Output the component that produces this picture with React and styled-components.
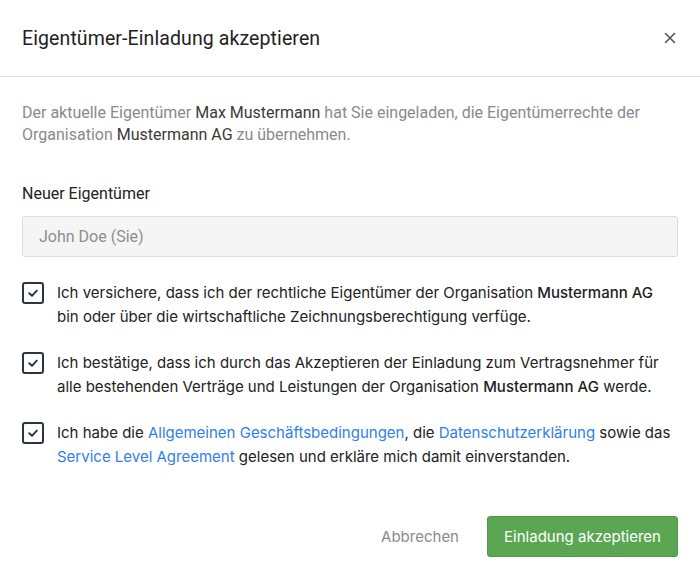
import React, { useState } from 'react'
import styled, { createGlobalStyle } from 'styled-components'

const GlobalStyle = createGlobalStyle`
  html, body {
    margin: 0;
    padding: 0;
    background: #fff;
  }
  * { box-sizing: border-box; }
`

const agreements = [
  {
    id: 'owner',
    parts: [
      'Ich versichere, dass ich der rechtliche Eigentümer der Organisation ',
      { strong: 'Mustermann AG' },
      ' bin oder über die wirtschaftliche Zeichnungsberechtigung verfüge.',
    ],
  },
  {
    id: 'contracts',
    parts: [
      'Ich bestätige, dass ich durch das Akzeptieren der Einladung zum Vertragsnehmer für alle bestehenden Verträge und Leistungen der Organisation ',
      { strong: 'Mustermann AG' },
      ' werde.',
    ],
  },
  {
    id: 'terms',
    parts: [
      'Ich habe die ',
      { link: 'Allgemeinen Geschäftsbedingungen' },
      ', die ',
      { link: 'Datenschutzerklärung' },
      ' sowie das ',
      { link: 'Service Level Agreement' },
      ' gelesen und erkläre mich damit einverstanden.',
    ],
  },
]

function App() {
  const [checked, setChecked] = useState({ owner: true, contracts: true, terms: true })

  const toggle = (id) => setChecked((c) => ({ ...c, [id]: !c[id] }))

  return (
    <>
      <GlobalStyle />
      <Modal>
        <Header>
          <Title>Eigentümer-Einladung akzeptieren</Title>
          <CloseButton aria-label="Schließen">
            <svg width="12" height="12" viewBox="0 0 12 12">
              <path d="M1.5 1.5 L10.5 10.5 M10.5 1.5 L1.5 10.5" stroke="#555" strokeWidth="1.6" strokeLinecap="round" />
            </svg>
          </CloseButton>
        </Header>
        <Body>
          <Intro>
            Der aktuelle Eigentümer <Strong>Max Mustermann</Strong> hat Sie eingeladen, die Eigentümerrechte der
            Organisation <Strong>Mustermann AG</Strong> zu übernehmen.
          </Intro>
          <Field>
            <Label>Neuer Eigentümer</Label>
            <Input disabled placeholder="John Doe (Sie)" />
          </Field>
          <CheckList>
            {agreements.map((a) => (
              <CheckRow key={a.id} onClick={() => toggle(a.id)}>
                <Box>
                  {checked[a.id] && (
                    <svg width="12" height="10" viewBox="0 0 12 10">
                      <path d="M2.2 5.2 L5 7.8 L9.8 2.6" fill="none" stroke="#2a3542" strokeWidth="1.9" strokeLinecap="round" strokeLinejoin="round" />
                    </svg>
                  )}
                </Box>
                <CheckText>
                  {a.parts.map((p, i) =>
                    typeof p === 'string' ? (
                      <React.Fragment key={i}>{p}</React.Fragment>
                    ) : p.strong ? (
                      <Bold key={i}>{p.strong}</Bold>
                    ) : (
                      <Link key={i} href="#">{p.link}</Link>
                    )
                  )}
                </CheckText>
              </CheckRow>
            ))}
          </CheckList>
        </Body>
        <Footer>
          <CancelButton>Abbrechen</CancelButton>
          <PrimaryButton>Einladung akzeptieren</PrimaryButton>
        </Footer>
      </Modal>
    </>
  )
}

export default App

const Modal = styled.div`
  width: 700px;
  height: 577px;
  background: #fff;
  display: flex;
  flex-direction: column;
`
const Header = styled.div`
  height: 77px;
  padding: 0 22px;
  border-bottom: 1px solid #dedede;
  display: flex;
  align-items: center;
  justify-content: space-between;
`
const Title = styled.h2`
  margin: 0;
  font-family: Roboto, "Liberation Sans", sans-serif;
  font-weight: 400;
  font-size: 19.5px;
  color: #222;
  letter-spacing: 0.1px;
`
const CloseButton = styled.button`
  border: none;
  background: none;
  padding: 4px;
  margin-right: -2px;
  cursor: pointer;
  display: flex;
`
const Body = styled.div`
  padding: 25px 22px 0;
  display: flex;
  flex-direction: column;
`
const Intro = styled.p`
  margin: 0;
  font-family: Roboto, "Liberation Sans", sans-serif;
  font-size: 16px;
  line-height: 22px;
  color: #8a8a8a;
`
const Strong = styled.span`
  color: #3a3a3a;
`
const Field = styled.div`
  margin-top: 37px;
  display: flex;
  flex-direction: column;
  gap: 11px;
`
const Label = styled.label`
  font-family: Roboto, "Liberation Sans", sans-serif;
  font-size: 16px;
  line-height: 22px;
  color: #222;
`
const Input = styled.input`
  height: 41px;
  width: 100%;
  padding: 0 16px;
  border: 1px solid #dcdcdc;
  border-radius: 3px;
  background: #f5f5f5;
  font-family: Roboto, "Liberation Sans", sans-serif;
  font-size: 16px;
  &::placeholder { color: #8e8e8e; }
`
const CheckList = styled.div`
  margin-top: 24px;
  display: flex;
  flex-direction: column;
  gap: 22px;
`
const CheckRow = styled.div`
  display: flex;
  align-items: flex-start;
  gap: 13px;
  cursor: pointer;
`
const Box = styled.span`
  flex: none;
  width: 22px;
  height: 22px;
  margin-top: 1px;
  border: 2px solid #2a3542;
  border-radius: 3px;
  display: flex;
  align-items: center;
  justify-content: center;
`
const CheckText = styled.div`
  font-family: Inter, "Noto Sans", sans-serif;
  font-size: 15px;
  line-height: 24px;
  color: #222;
`
const Bold = styled.span`
  font-weight: 500;
`
const Link = styled.a`
  color: #2f80ed;
  text-decoration: none;
`
const Footer = styled.div`
  margin-top: auto;
  padding: 0 22px 20px;
  display: flex;
  justify-content: flex-end;
  align-items: center;
  gap: 28px;
`
const CancelButton = styled.button`
  border: none;
  background: none;
  font-family: Inter, "Noto Sans", sans-serif;
  font-size: 15px;
  color: #8a8a8a;
  cursor: pointer;
  padding: 0;
`
const PrimaryButton = styled.button`
  height: 41px;
  width: 191px;
  padding: 0;
  border: 1px solid #4f9a48;
  border-radius: 3px;
  background: #5aa653;
  color: #fff;
  font-family: Inter, "Noto Sans", sans-serif;
  font-size: 15px;
  cursor: pointer;
`
